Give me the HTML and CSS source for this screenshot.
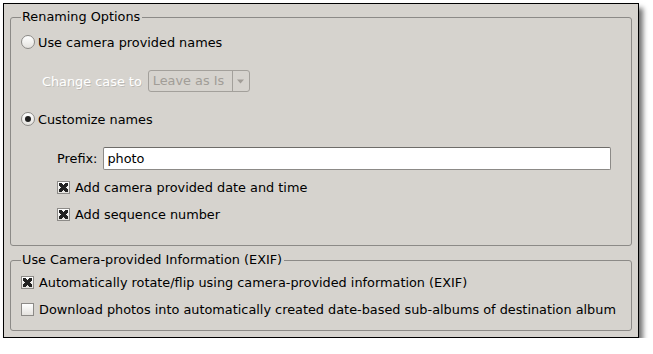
FILE: index.html
```html
<!DOCTYPE html>
<html lang="en">
<head>
  <meta charset="UTF-8" />
  <title>Renaming Options</title>
  <link rel="stylesheet" href="styles.css">
</head>
<body>

<div class="window">
  <!-- Renaming options -->
  <fieldset class="group group-rename">
    <legend>Renaming Options</legend>

    <label class="row first-row">
      <span class="radio"></span>
      Use camera provided names
    </label>

    <div class="row case-row">
      <span class="muted">Change case to</span>
      <span class="combo">
        <span class="combo-text">Leave as Is</span>
        <span class="combo-arrow">
          <svg width="9" height="5" viewBox="0 0 9 5"><path d="M1 0.5 L8 0.5 L4.5 4.5 Z" fill="#a19d97"/></svg>
        </span>
      </span>
    </div>

    <label class="row custom-row">
      <span class="radio checked"></span>
      Customize names
    </label>

    <div class="row prefix-row">
      <span>Prefix:</span>
      <span class="input">photo</span>
    </div>

    <label class="row sub-row">
      <span class="check checked"></span>
      Add camera provided date and time
    </label>

    <label class="row sub-row">
      <span class="check checked"></span>
      Add sequence number
    </label>
  </fieldset>

  <!-- EXIF -->
  <fieldset class="group group-exif">
    <legend>Use Camera-provided Information (EXIF)</legend>

    <label class="row">
      <span class="check checked"></span>
      Automatically rotate/flip using camera-provided information (EXIF)
    </label>

    <label class="row">
      <span class="check"></span>
      Download photos into automatically created date-based sub-albums of destination album
    </label>
  </fieldset>
</div>

</body>
</html>
```

FILE: styles.css
```css
body {
  margin: 0;
  background: #ffffff;
  font-family: "DejaVu Sans", sans-serif;
  font-size: 12.85px;
  color: #000000;
}

.window {
  width: 622px;
  height: 333px;
  margin: 3px 0 0 3px;
  padding: 0 6px 0 6px;
  background: #d6d3ce;
  border: 1px solid #000000;
  box-shadow: 4px 5px 5px rgba(0, 0, 0, 0.55);
  display: flex;
  flex-direction: column;
}

.group {
  margin: 0;
  padding: 0 8px 0 10px;
  border: 1px solid #8c8a87;
  border-radius: 3px;
  min-width: 0;
}

.group legend {
  padding: 0 2px 0 1px;
  margin-left: 0;
  line-height: 16px;
}

.group-rename {
  height: 235px;
  margin-top: 5px;
}

.group-exif {
  height: 77px;
  margin-top: 6px;
}

.row {
  display: flex;
  align-items: center;
  height: 20px;
  gap: 3px;
  white-space: nowrap;
}

.first-row {
  margin-top: 7px;
}

.case-row {
  margin-top: 18px;
  height: 22px;
  padding-left: 21px;
  gap: 6px;
}

.muted {
  color: #ffffff;
  text-shadow: 1px 1px 0 rgba(0, 0, 0, 0.12);
}

.combo {
  display: flex;
  width: 100px;
  height: 20px;
  border: 1px solid #a3a09b;
  border-radius: 3px;
  color: #a19d97;
}

.combo-text {
  flex: 1;
  padding-left: 4px;
  line-height: 20px;
}

.combo-arrow {
  width: 16px;
  border-left: 1px solid #a3a09b;
  display: flex;
  align-items: center;
  justify-content: center;
}

.custom-row {
  margin-top: 17px;
}

.prefix-row {
  margin-top: 18px;
  height: 23px;
  padding-left: 36px;
  gap: 6px;
}

.input {
  flex: 1;
  height: 21px;
  line-height: 21px;
  background: #ffffff;
  border: 1px solid #8c8a87;
  border-top-color: #6e6c69;
  border-radius: 2px;
  padding-left: 3px;
  margin-right: 12px;
}

.sub-row {
  margin-top: 7px;
  padding-left: 36px;
  gap: 5px;
}

.radio {
  width: 14px;
  height: 14px;
  border: 1px solid #8c8a87;
  border-radius: 50%;
  background: linear-gradient(#ffffff, #e4e2de);
  box-sizing: border-box;
  position: relative;
  flex: none;
}

.radio.checked::after {
  content: "";
  position: absolute;
  left: 3px;
  top: 3px;
  width: 6px;
  height: 6px;
  border-radius: 50%;
  background: #1e1e1e;
}

.check {
  width: 13px;
  height: 13px;
  border: 1px solid #8c8a87;
  background: linear-gradient(#ffffff, #e4e2de);
  box-sizing: border-box;
  position: relative;
  flex: none;
}

.check.checked::after {
  content: "";
  position: absolute;
  inset: 1px;
  background:
    linear-gradient(45deg, transparent 36%, #222 36%, #222 64%, transparent 64%),
    linear-gradient(-45deg, transparent 36%, #222 36%, #222 64%, transparent 64%);
}

.group-exif .row {
  gap: 5px;
  margin-top: 4px;
}

.group-exif .row + .row {
  margin-top: 7px;
}
```
